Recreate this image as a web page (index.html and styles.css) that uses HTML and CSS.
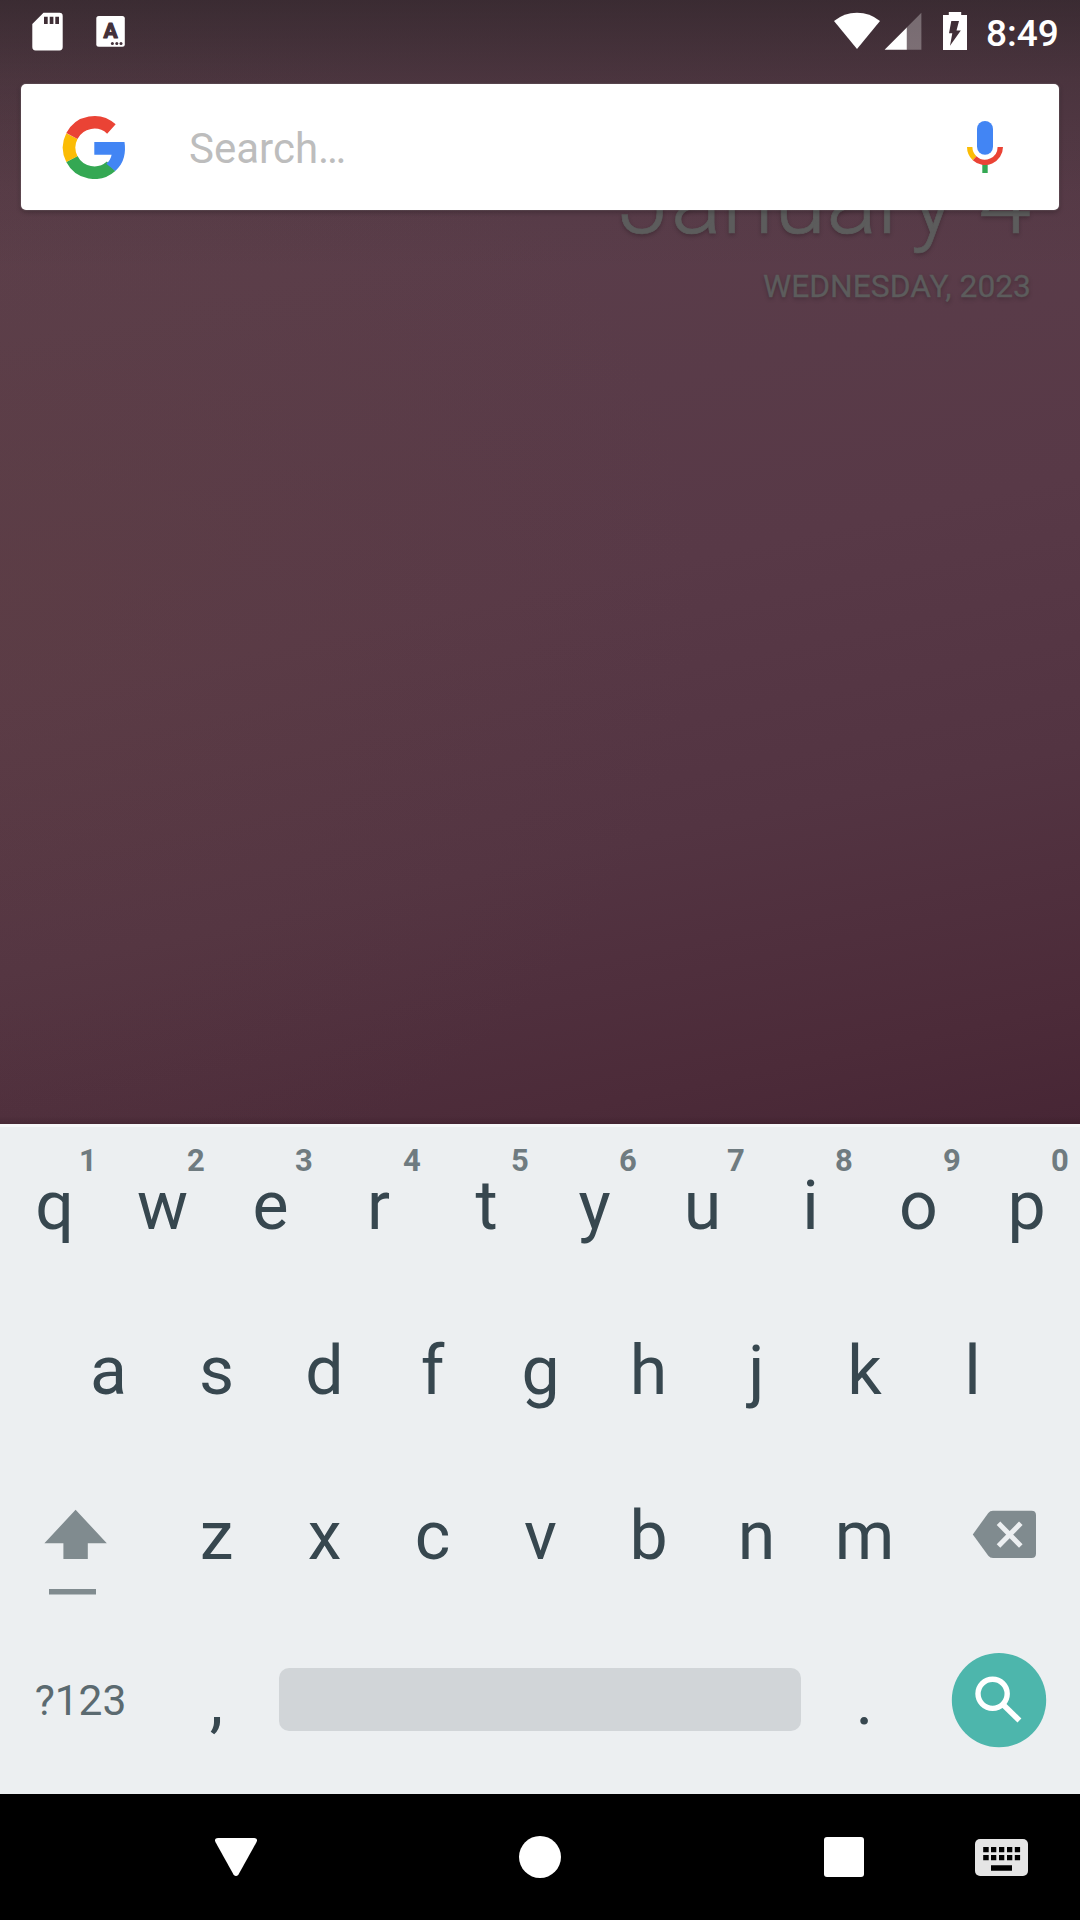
FILE: index.html
```html
<!DOCTYPE html>
<html lang="en">
<head>
<meta charset="utf-8">
<title>Search</title>
<link rel="stylesheet" href="styles.css">
</head>
<body>
<div class="screen">
  <main class="wallpaper">
    <header class="status-bar">
      <svg class="sd-icon" width="32" height="39" viewBox="32 12 32 39"><path fill="#fff" fill-rule="evenodd" d="M43.5 12.7H59.5Q62.7 12.7 62.7 16V47Q62.7 50.4 59.5 50.4H35.6Q32.3 50.4 32.3 47V24ZM44 16.7V24H47.7V16.7ZM49.7 16.7V24H53.4V16.7ZM55.3 16.7V24H59V16.7Z"/></svg>
      <svg class="lang-icon" width="30" height="32" viewBox="96 15 30 32"><rect x="96.3" y="16" width="28.5" height="30.8" rx="2.5" fill="#fff"/><text class="lang-letter" x="110.5" y="38.3" text-anchor="middle">A</text><g fill="#43313a"><circle cx="112.4" cy="43.4" r="1.5"/><circle cx="116.8" cy="43.4" r="1.5"/><circle cx="121" cy="43.4" r="1.5"/></g></svg>
      <div class="status-right">
        <svg width="134" height="40" viewBox="834 11 134 40">
          <path fill="#fff" d="M857 49L834 21Q844 12.7 857 12.7T880 21Z"/>
          <path fill="#fff" fill-opacity=".3" d="M921.4 12.7V49.7H906.7V27.5Z"/>
          <path fill="#fff" d="M906.8 27.4V49.7H884.6Z"/>
          <path fill="#fff" fill-rule="evenodd" d="M948.8 12H961.2V15H967V50H943V15H948.8ZM951.3 21L949 33.3H952.3L950 45.7L960.8 30.5H956.5L959 21Z"/>
        </svg>
        <span class="clock">8:49</span>
      </div>
    </header>
    <section class="search-card">
      <svg class="logo" width="64" height="64" viewBox="62 115 64 64">
        <g fill="none" stroke-width="12.6">
          <path stroke="#34a853" d="M71.9 159A25.2 25.2 0 0 0 111.1 166.3"/>
          <path stroke="#fbbc05" d="M71.9 136A25.2 25.2 0 0 0 71.9 159"/>
          <path stroke="#ea4335" d="M71.9 136A25.2 25.2 0 0 1 111.4 129"/>
        </g>
        <path fill="#4285f4" d="M94.3 142H124.5C126 152 124.5 163 115.3 171L106.3 163.7Q110.7 160 111.6 154.7H94.3Z"/>
      </svg>
      <span class="placeholder">Search…</span>
      <svg class="mic" width="38" height="54" viewBox="966 120 38 54">
        <rect x="977" y="121" width="16" height="33.8" rx="8" fill="#4285f4"/>
        <path d="M982.3 164H987.7V173H982.3Z" fill="#34a853"/>
        <g fill="none" stroke-width="5.4"><path stroke="#fbbc05" d="M969.7 147A15.3 15.3 0 0 0 974.6 158.2"/><path stroke="#ea4335" d="M974.6 158.2A15.3 15.3 0 0 0 1000.3 147"/></g>
      </svg>
    </section>
    <section class="date">
      <div class="day">January 4</div>
      <div class="weekday">WEDNESDAY, 2023</div>
    </section>
  </main>
  <section class="keyboard">
    <div class="row">
      <div class="key">q<span class="hint">1</span></div><div class="key">w<span class="hint">2</span></div><div class="key">e<span class="hint">3</span></div><div class="key">r<span class="hint">4</span></div><div class="key">t<span class="hint">5</span></div><div class="key">y<span class="hint">6</span></div><div class="key">u<span class="hint">7</span></div><div class="key">i<span class="hint">8</span></div><div class="key">o<span class="hint">9</span></div><div class="key">p<span class="hint">0</span></div>
    </div>
    <div class="row">
      <div class="key">a</div><div class="key">s</div><div class="key">d</div><div class="key">f</div><div class="key">g</div><div class="key">h</div><div class="key">j</div><div class="key">k</div><div class="key">l</div>
    </div>
    <div class="row">
      <div class="key wide"><svg class="shift" width="64" height="88" viewBox="44 1509 64 88"><path fill="#808b8f" d="M75.6 1509.7L106.8 1543.3H87.8V1559H63.4V1543.3H44.4ZM49 1589H96V1594.6H49Z"/></svg></div>
      <div class="key">z</div><div class="key">x</div><div class="key">c</div><div class="key">v</div><div class="key">b</div><div class="key">n</div><div class="key">m</div>
      <div class="key wide"><svg class="backspace" width="64" height="50" viewBox="972 1510 64 50"><path fill="#808b8f" d="M993 1510.7H1031.5Q1036 1510.7 1036 1515V1553.8Q1036 1558 1031.5 1558H993Q990 1558 988.3 1555.7L972.8 1534.4L988.3 1513Q990 1510.7 993 1510.7Z"/><path stroke="#eceff1" stroke-width="5" d="M998.5 1523.3L1020.8 1546M1020.8 1523.3L998.5 1546"/></svg></div>
    </div>
    <div class="row">
      <div class="key wide symbols">?123</div>
      <div class="key">,</div>
      <div class="space-key"><div class="space-bar"></div></div>
      <div class="key">.</div>
      <div class="key wide"><svg class="go" width="96" height="96" viewBox="951 1652 96 96"><ellipse cx="999" cy="1700.1" rx="47.2" ry="47.2" fill="#4db6ac"/><g fill="none" stroke="#fff"><circle cx="992.6" cy="1693.8" r="14.6" stroke-width="5.4"/><path stroke-width="5.6" d="M1003.5 1705L1019.4 1720.6"/></g></svg></div>
    </div>
  </section>
  <nav class="nav-bar">
    <svg class="back" width="42" height="38" viewBox="0 0 42 38"><path fill="#fff" d="M3 0H39Q43.500 0 41.300 4.500L23.500 36.500Q21 39.500 18.500 36.500L.7 4.500Q-1.500 0 3 0Z"/></svg>
    <div class="home"></div>
    <div class="recents"></div>
    <svg class="ime" width="53" height="37" viewBox="975 1839 53 37"><rect x="975" y="1839" width="53" height="37" rx="5" fill="#e5e5e5"/><path d="M983.2 1847h5.500v5.300h-5.500zM991 1847h5.300v5.300h-5.300zM999 1847h5.300v5.300h-5.300zM1007 1847h5.300v5.300h-5.300zM1014.800 1847h5.300v5.300h-5.300zM983.200 1855h5.500v5.300h-5.500zM991 1855h5.300v5.300h-5.300zM999 1855h5.300v5.300h-5.300zM1007 1855h5.300v5.300h-5.300zM1014.800 1855h5.300v5.300h-5.300zM991 1865.300h21v5.400h-21z"/></svg>
  </nav>
</div>
</body>
</html>
```
FILE: styles.css
```css
* { box-sizing: border-box; }
body { margin: 0; font-family: Roboto, "Noto Sans", sans-serif; }
svg { display: block; flex: none; }
.screen { width: 1080px; height: 1920px; display: flex; flex-direction: column; overflow: hidden; }

.wallpaper {
  height: 1124px;
  background:
    linear-gradient(to top, rgba(20, 0, 10, .14), transparent 8px),
    linear-gradient(to bottom, rgba(29, 26, 28, .52), rgba(29, 26, 28, .26) 80px, rgba(29, 26, 28, .07) 190px, transparent 270px),
    radial-gradient(ellipse 700px 620px at 0 600px, rgba(98, 66, 66, .35), transparent),
    linear-gradient(168deg, #5b3f4b 0, #5a3d4a 25%, #583947 52%, #533442 72%, #4c2b39 91%, #472635 100%);
}
.status-bar { height: 84px; padding: 0 22px 0 32px; display: flex; align-items: flex-start; }
.sd-icon { margin-top: 12px; }
.lang-icon { margin: 15px 0 0 32px; }
.lang-letter { font-size: 21px; font-weight: 700; fill: #43313a; stroke: #43313a; stroke-width: 1.2px; stroke-linejoin: round; }
.status-right { margin-left: auto; display: flex; align-items: flex-start; gap: 18px; padding-top: 11px; }
.clock { width: 72px; color: #fff; font-size: 37px; font-weight: 500; line-height: 45px; white-space: nowrap; }

.search-card {
  position: relative;
  z-index: 1;
  height: 126px;
  margin: 0 21px;
  padding: 0 56px 0 41px;
  display: flex;
  align-items: center;
  background: #fff;
  border-radius: 5px;
  box-shadow: 0 0 2px rgba(255, 255, 255, .35), 0 2px 5px rgba(0, 0, 0, .3);
}
.placeholder { flex: 1; margin-left: 63px; padding-top: 3px; color: #bdbdbd; font-size: 42px; line-height: 50px; }
.mic { margin-right: -1px; }

.date { margin-top: -69px; padding-right: 49px; text-align: right; color: #5c5c5c; text-shadow: 0 2px 4px rgba(0, 0, 0, .25); }
.day { font-size: 95px; font-weight: 300; line-height: 120px; -webkit-text-stroke: .7px #5c5c5c; }
.weekday { font-size: 31.8px; line-height: 44px; margin-top: 3px; -webkit-text-stroke: .3px #5c5c5c; }

.keyboard { height: 670px; background: #eceff1; box-shadow: inset 0 3px #f5f7f8; }
.row { height: 165px; display: flex; justify-content: center; }
.key { position: relative; width: 108px; padding-left: 1px; text-align: center; color: #37474f; font-size: 68px; line-height: 165px; }
.wide { width: 162px; padding-left: 0; }
.hint { position: absolute; left: 68px; top: 21px; width: 40px; font-size: 31px; font-weight: 700; line-height: 32px; color: #6f7b80; }
.shift { margin: 55px 0 0 44px; }
.backspace { margin: 56px 0 0 54px; }
.symbols { padding-right: 1px; font-size: 42.5px; line-height: 163px; color: #5b6a70; }
.space-key { width: 540px; padding: 49px 9px 0; }
.space-bar { height: 63px; border-radius: 10px; background: #d1d5d8; }
.go { margin: 33px 0 0 33px; }

.nav-bar { flex: 1; background: #000; display: flex; align-items: center; padding: 0 52px 0 215px; }
.home { width: 42px; height: 42px; border-radius: 50%; background: #fff; margin-left: 262px; }
.recents { width: 40px; height: 40px; border-radius: 3px; background: #fff; margin-left: 263px; }
.ime { margin-left: auto; }
```
